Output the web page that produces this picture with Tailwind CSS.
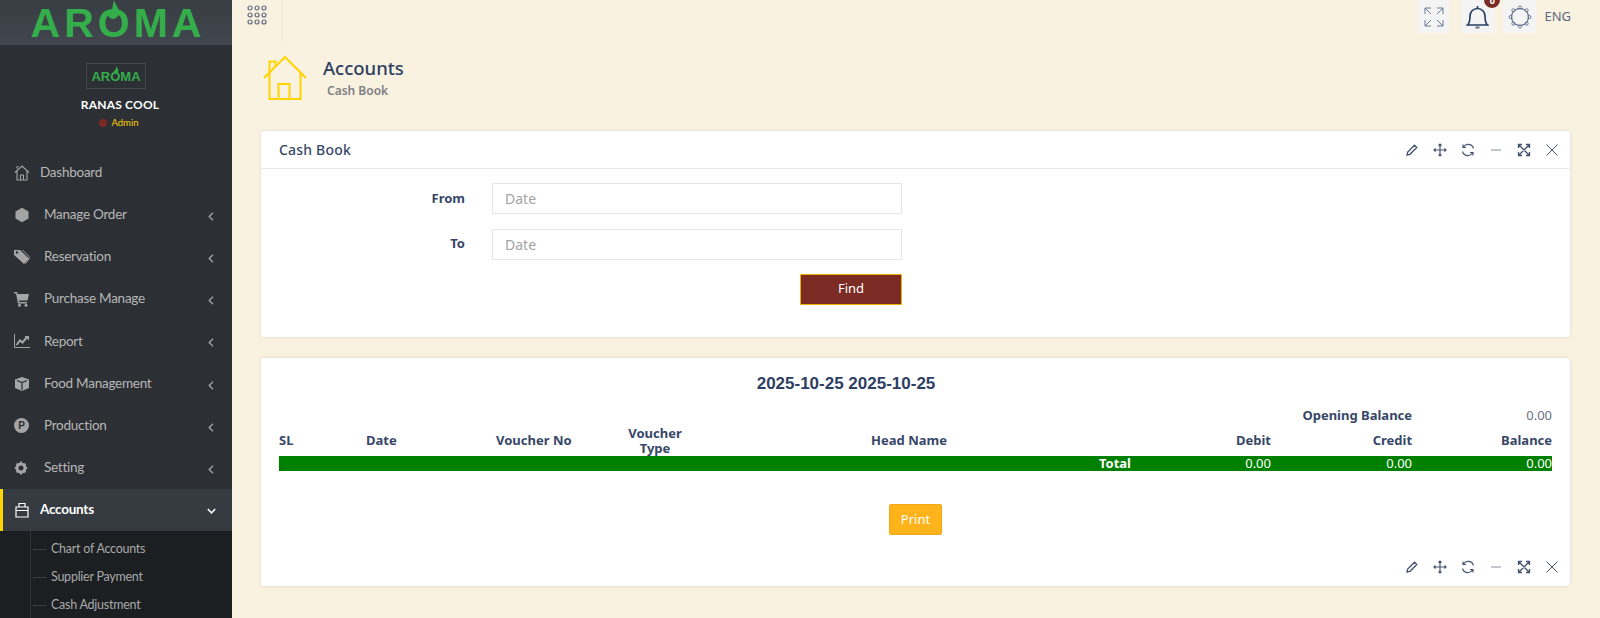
<!DOCTYPE html>
<html lang="en">
<head>
<meta charset="utf-8">
<title>Cash Book</title>
<script src="https://cdn.jsdelivr.net/npm/@tailwindcss/browser@4"></script>
</head>
<body class="m-0 h-[618px] w-[1600px] overflow-hidden bg-[#faf2e0] font-['Noto_Sans',sans-serif] text-[#374767]">
<div class="flex h-[618px] w-[1600px]">
  <aside class="flex h-[618px] w-[232px] shrink-0 flex-col overflow-hidden bg-[#2c2f34] font-['Lato',sans-serif]">
    <div class="relative flex h-[45px] shrink-0 items-center justify-center bg-gradient-to-b from-[#383d43] to-[#42474f] pl-[4px] font-['Liberation_Sans',sans-serif] text-[41px] font-bold leading-none tracking-[4px] text-[#34ae4b]">
      <span class="mt-[1px]">AROMA</span>
      <svg class="absolute left-[103px] top-0 h-[20px] w-[20px]" viewBox="0 0 20 20"><path d="M11 0c1 5 5 7 5 12 0 4-3 7-6 7s-6-3-6-7c2 1 4 0 5-3 1-3 1-6 2-9z" fill="#34ae4b"/></svg>
    </div>
    <div class="flex h-[106.500px] shrink-0 flex-col items-center">
      <div class="relative mt-[18px] flex h-[26px] w-[60px] items-center justify-center border border-[#44484e] bg-[#2c2f34] font-['Liberation_Sans',sans-serif] text-[13px] font-bold leading-none text-[#34ae4b]">AROMA
        <svg class="absolute left-[25px] top-[2px] h-[8px] w-[8px]" viewBox="0 0 20 20"><path d="M11 0c1 5 5 7 5 12 0 4-3 7-6 7s-6-3-6-7c2 1 4 0 5-3 1-3 1-6 2-9z" fill="#34ae4b"/></svg>
      </div>
      <div class="mt-[7px] pl-[8px] text-[12px] font-bold leading-[18px] tracking-[0.2px] text-white">RANAS COOL</div>
      <div class="mt-[1px] flex items-center gap-[4px] pl-[6px] text-[9.500px] leading-[16px] text-[#ffd400]"><span class="h-[8px] w-[8px] rounded-full bg-[#7b2b24]"></span>Admin</div>
    </div>
    <nav class="text-[13.500px] leading-none tracking-[-0.25px] text-[#b7b7b7]">
      <a class="flex h-[42.200px] items-center pl-[14px]">
        <svg class="h-[16px] w-[16px] shrink-0" viewBox="0 0 16 16" fill="none" stroke="#a5a5a5" stroke-width="1.100"><path d="M1 7.500 8 1l7 6.500M3 6v9h10V6M6.500 15v-5h3v5M3 3.500V1.800h1.500"/></svg>
        <span class="ml-[10px]">Dashboard</span>
      </a>
      <a class="flex h-[42.200px] items-center pl-[14px]">
        <svg class="h-[16px] w-[16px] shrink-0" viewBox="0 0 16 16"><path d="M8 .8 14.500 4.400v7.200L8 15.200 1.500 11.600V4.400z" fill="#a5a5a5"/></svg>
        <span class="ml-[14px] flex-1">Manage Order</span>
        <svg class="mr-[18px] mt-[3px] h-[9px] w-[6px]" viewBox="0 0 6 9" fill="none" stroke="#a5a5a5" stroke-width="1.300"><path d="M5 .8 1.200 4.500 5 8.200"/></svg>
      </a>
      <a class="flex h-[42.200px] items-center pl-[14px]">
        <svg class="h-[16px] w-[16px] shrink-0" viewBox="0 0 16 16"><path d="M0 1h6l9 8.500-5 5.500L0 6z" fill="#a5a5a5"/><path d="M8.500 1 16 8.500l-4.500 6" fill="none" stroke="#a5a5a5"/><circle cx="3" cy="3.500" r="1.200" fill="#2c2f34"/></svg>
        <span class="ml-[14px] flex-1">Reservation</span>
        <svg class="mr-[18px] mt-[3px] h-[9px] w-[6px]" viewBox="0 0 6 9" fill="none" stroke="#a5a5a5" stroke-width="1.300"><path d="M5 .8 1.200 4.500 5 8.200"/></svg>
      </a>
      <a class="flex h-[42.200px] items-center pl-[14px]">
        <svg class="h-[16px] w-[16px] shrink-0" viewBox="0 0 16 16"><path d="M0 1h3l.7 2H15l-1.500 6.500H5l.3 1.500H13v1.500H4L2 2.500H0z" fill="#a5a5a5"/><circle cx="5.500" cy="14.300" r="1.500" fill="#a5a5a5"/><circle cx="12" cy="14.300" r="1.500" fill="#a5a5a5"/></svg>
        <span class="ml-[14px] flex-1">Purchase Manage</span>
        <svg class="mr-[18px] mt-[3px] h-[9px] w-[6px]" viewBox="0 0 6 9" fill="none" stroke="#a5a5a5" stroke-width="1.300"><path d="M5 .8 1.200 4.500 5 8.200"/></svg>
      </a>
      <a class="flex h-[42.200px] items-center pl-[14px]">
        <svg class="h-[16px] w-[16px] shrink-0" viewBox="0 0 16 16" fill="none" stroke="#a5a5a5"><path d="M.5 1v13.500H16" stroke-width="1"/><path d="M2.500 12 6 7.500l2.500 2L13 4" stroke-width="2"/><path d="M10.500 3H15v4.500z" fill="#a5a5a5" stroke="none"/></svg>
        <span class="ml-[14px] flex-1">Report</span>
        <svg class="mr-[18px] mt-[3px] h-[9px] w-[6px]" viewBox="0 0 6 9" fill="none" stroke="#a5a5a5" stroke-width="1.300"><path d="M5 .8 1.200 4.500 5 8.200"/></svg>
      </a>
      <a class="flex h-[42.200px] items-center pl-[14px]">
        <svg class="h-[16px] w-[16px] shrink-0" viewBox="0 0 16 16"><path d="M8 1 15 3.500V12L8 15 1 12V3.500z" fill="#a5a5a5"/><path d="M3 4.500 8 6.500l5-2M8 6.500V14" fill="none" stroke="#2c2f34" stroke-width="1.200"/></svg>
        <span class="ml-[14px] flex-1">Food Management</span>
        <svg class="mr-[18px] mt-[3px] h-[9px] w-[6px]" viewBox="0 0 6 9" fill="none" stroke="#a5a5a5" stroke-width="1.300"><path d="M5 .8 1.200 4.500 5 8.200"/></svg>
      </a>
      <a class="flex h-[42.200px] items-center pl-[14px]">
        <span class="flex h-[15px] w-[15px] shrink-0 items-center justify-center rounded-full bg-[#a5a5a5] font-['Liberation_Sans',sans-serif] text-[10px] font-bold text-[#2c2f34]">P</span>
        <span class="ml-[15px] flex-1">Production</span>
        <svg class="mr-[18px] mt-[3px] h-[9px] w-[6px]" viewBox="0 0 6 9" fill="none" stroke="#a5a5a5" stroke-width="1.300"><path d="M5 .8 1.200 4.500 5 8.200"/></svg>
      </a>
      <a class="flex h-[42.200px] items-center pl-[14px]">
        <svg class="h-[16px] w-[16px] shrink-0" viewBox="0 0 16 16" fill="none"><circle cx="7" cy="8" r="4" stroke="#a5a5a5" stroke-width="3"/><path d="M7 1.500v2.500M7 12v2.500M.8 8h2.500M10.700 8h2.500M2.600 3.600l1.700 1.700M9.700 10.700l1.700 1.700M11.400 3.600 9.700 5.300M4.300 10.700l-1.700 1.700" stroke="#a5a5a5" stroke-width="2"/></svg>
        <span class="ml-[14px] flex-1">Setting</span>
        <svg class="mr-[18px] mt-[3px] h-[9px] w-[6px]" viewBox="0 0 6 9" fill="none" stroke="#a5a5a5" stroke-width="1.300"><path d="M5 .8 1.200 4.500 5 8.200"/></svg>
      </a>
      <a class="flex h-[42px] items-center border-l-[3px] border-[#ffd400] bg-[#363a41] pb-[1px] pl-[11px] font-bold text-white">
        <svg class="h-[16px] w-[16px] shrink-0" viewBox="0 0 16 16" fill="none" stroke="#fff" stroke-width="1.200"><path d="M2 5h12v10H2zM2 8.500h12M5 5V1.500h6V5"/></svg>
        <span class="ml-[10px] flex-1">Accounts</span>
        <svg class="mr-[16px] mt-[3px] h-[6px] w-[9px]" viewBox="0 0 9 6" fill="none" stroke="#fff" stroke-width="1.500"><path d="M.8 1 4.500 4.800 8.200 1"/></svg>
      </a>
    </nav>
    <ul class="relative flex-1 bg-[#1c1f22] pt-[4px] text-[12.500px] leading-[28px] tracking-[-0.25px] text-[#a8a8a8]">
      <span class="absolute bottom-0 left-[30px] top-0 w-[1px] bg-[#34373b]"></span>
      <li class="flex h-[28px] items-center pl-[33px]"><span class="mr-[5px] h-[1px] w-[13px] bg-[#3c3f43]"></span>Chart of Accounts</li>
      <li class="flex h-[28px] items-center pl-[33px]"><span class="mr-[5px] h-[1px] w-[13px] bg-[#3c3f43]"></span>Supplier Payment</li>
      <li class="flex h-[28px] items-center pl-[33px]"><span class="mr-[5px] h-[1px] w-[13px] bg-[#3c3f43]"></span>Cash Adjustment</li>
    </ul>
  </aside>

  <main class="min-w-0 flex-1">
    <header class="flex h-[45px] items-start">
      <div class="flex h-[45px] w-[51px] items-start border-r border-[#ece8dc] pl-[15px] pt-[5px]">
        <svg class="h-[20px] w-[20px]" viewBox="0 0 20 20" fill="none" stroke="#5f6b80" stroke-width="1.200"><circle cx="3" cy="3" r="2"/><circle cx="10" cy="3" r="2"/><circle cx="17" cy="3" r="2"/><circle cx="3" cy="10" r="2"/><circle cx="10" cy="10" r="2"/><circle cx="17" cy="10" r="2"/><circle cx="3" cy="17" r="2"/><circle cx="10" cy="17" r="2"/><circle cx="17" cy="17" r="2"/></svg>
      </div>
      <div class="ml-auto flex items-start pr-[29px]">
        <div class="flex h-[33px] w-[31px] items-center justify-center bg-[#f4f4f4]">
          <svg class="h-[20px] w-[20px]" viewBox="0 0 20 20" fill="none" stroke="#6c7a92" stroke-width="1"><path d="M1 7V1h6M1 1l6 6M13 1h6v6M19 1l-6 6M1 13v6h6M1 19l6-6M19 13v6h-6M19 19l-6-6"/></svg>
        </div>
        <div class="relative ml-[12px] flex h-[33px] w-[33px] items-center justify-center bg-[#f4f4f4]">
          <svg class="h-[27px] w-[23px]" viewBox="0 0 23 27" fill="none" stroke="#2b3f66" stroke-width="1.700"><path d="M1.500 22c2.500-2 2.500-5 2.500-9 0-4 3-7.500 7.500-7.500S19 9 19 13c0 4 0 7 2.500 9z"/><path d="M11.500 5.500V3"/><path d="M9.500 24.500h4" stroke-width="2" stroke="#6b7280"/></svg>
          <span class="absolute right-[-7px] top-[-9px] flex h-[18px] w-[18px] items-center justify-center rounded-full border border-white bg-[#7b2b24] text-[9px] font-bold leading-none text-white">0</span>
        </div>
        <div class="ml-[9px] flex h-[33px] w-[33px] items-center justify-center bg-[#f4f4f4]">
          <svg class="h-[24px] w-[24px]" viewBox="0 0 24 24" fill="none" stroke="#6c7a92" stroke-width="1"><circle cx="12" cy="12" r="8.500" stroke="#2b3f66"/><circle cx="12" cy="2.500" r="1.500"/><circle cx="12" cy="21.500" r="1.500"/><circle cx="2.500" cy="12" r="1.500"/><circle cx="21.500" cy="12" r="1.500"/><circle cx="5.300" cy="5.300" r="1.500"/><circle cx="18.700" cy="5.300" r="1.500"/><circle cx="5.300" cy="18.700" r="1.500"/><circle cx="18.700" cy="18.700" r="1.500"/></svg>
        </div>
        <span class="ml-[8px] mt-[8px] text-[13px] leading-[17px] text-[#5b6880]">ENG</span>
      </div>
    </header>

    <section class="flex h-[86px] items-start pl-[31px] pt-[11px]">
      <svg class="h-[44px] w-[44px] shrink-0" viewBox="0 0 44 44" fill="none" stroke="#ffd400" stroke-width="2"><path d="M1 22 22 1l21 21M6.500 17v26h31V17M15.500 43V28h11v15M6.500 17V5.500h6V11"/></svg>
      <div class="ml-[16px]">
        <h1 class="font-['Noto_Sans',sans-serif] text-[18.500px] font-medium leading-[24px] text-[#2d3e63]">Accounts</h1>
        <p class="ml-[4px] mt-[3px] text-[12px] font-semibold leading-[16px] text-[#7c7f86]">Cash Book</p>
      </div>
    </section>

    <div class="ml-[29px] mr-[30px] h-[206px] rounded-[2px] bg-white shadow-[0_0_3px_rgba(55,71,103,0.18)]">
      <div class="flex h-[38px] items-center border-b border-[#e8e9ef] pl-[18px] pr-[11px]">
        <h2 class="text-[14px] font-medium leading-none tracking-[0.2px] text-[#374767]">Cash Book</h2>
        <div class="ml-auto flex w-[154px] items-center justify-between">
          <svg class="h-[14px] w-[14px]" viewBox="0 0 14 14" fill="none" stroke="#46536e" stroke-width="1.300"><path d="M2 12l.7-3L9.500 2.200l2.300 2.300L5 11.300zM2 12l1-.2"/></svg>
          <svg class="h-[14px] w-[14px]" viewBox="0 0 14 14" fill="none" stroke="#46536e" stroke-width="1.200"><path d="M7 1v12M1 7h12M5.500 2.500 7 1l1.500 1.500M5.500 11.500 7 13l1.500-1.500M2.500 5.500 1 7l1.500 1.500M11.500 5.500 13 7l-1.500 1.500"/></svg>
          <svg class="h-[14px] w-[14px]" viewBox="0 0 14 14" fill="none" stroke="#46536e" stroke-width="1.200"><path d="M12.500 5.500A5.500 5.500 0 0 0 2.500 4M1.500 8.500A5.500 5.500 0 0 0 11.500 10M2 1.500V4.500h3M12 12.500V9.500H9"/></svg>
          <svg class="h-[14px] w-[14px]" viewBox="0 0 14 14" fill="none" stroke="#9aa2b1" stroke-width="1.200"><path d="M2 7h10"/></svg>
          <svg class="h-[14px] w-[14px]" viewBox="0 0 14 14" fill="none" stroke="#46536e" stroke-width="1.300"><path d="M2 2l10 10M12 2 2 12M1.500 5V1.500H5M9 1.500h3.500V5M1.500 9v3.500H5M9 12.500h3.500V9"/></svg>
          <svg class="h-[14px] w-[14px]" viewBox="0 0 14 14" fill="none" stroke="#46536e" stroke-width="1"><path d="M1.500 1.500l11 11M12.500 1.500l-11 11"/></svg>
        </div>
      </div>
      <form class="pt-[14px]">
        <div class="flex h-[31px] items-center">
          <label class="w-[204px] text-right text-[13px] font-bold leading-none text-[#374767]">From</label>
          <input class="ml-[27px] h-[31px] w-[410px] border border-[#e6e6e6] px-[12px] pb-[1px] text-[14px] placeholder:text-[#a3a3a3]" placeholder="Date">
        </div>
        <div class="mt-[15px] flex h-[31px] items-center">
          <label class="mb-[3px] w-[204px] text-right text-[13px] font-bold leading-none text-[#374767]">To</label>
          <input class="ml-[27px] h-[31px] w-[410px] border border-[#e6e6e6] px-[12px] pb-[1px] text-[14px] placeholder:text-[#a3a3a3]" placeholder="Date">
        </div>
        <div class="mt-[14px] flex w-[641px] justify-end">
          <button type="button" class="h-[31px] w-[102px] rounded-[1px] border border-[#f0b000] bg-[#7b2b24] pb-[2px] text-[13px] leading-none text-white">Find</button>
        </div>
      </form>
    </div>

    <div class="ml-[29px] mr-[30px] mt-[21px] h-[228px] rounded-[2px] bg-white px-[18px] shadow-[0_0_3px_rgba(55,71,103,0.18)]">
      <h3 class="pr-[139px] pt-[15px] text-center font-['Liberation_Sans',sans-serif] text-[17px] font-bold leading-[22px] text-[#2d3e63]">2025-10-25 2025-10-25</h3>
      <table class="mt-[10px] w-[1273px] table-fixed border-collapse text-[13px] leading-[15px]">
        <colgroup>
          <col class="w-[87px]"><col class="w-[130px]"><col class="w-[129px]"><col class="w-[60px]"><col class="w-[448px]"><col class="w-[138px]"><col class="w-[141px]"><col class="w-[140px]">
        </colgroup>
        <tbody>
          <tr class="h-[20px]">
            <th colspan="7" class="p-0 text-right font-bold">Opening Balance</th>
            <td class="p-0 text-right text-[#6b7280]">0.00</td>
          </tr>
          <tr class="h-[31px] align-middle">
            <th class="p-0 text-left font-bold">SL</th>
            <th class="p-0 text-left font-bold">Date</th>
            <th class="p-0 text-left font-bold">Voucher No</th>
            <th class="p-0 text-center font-bold">Voucher Type</th>
            <th class="p-0 text-center font-bold">Head Name</th>
            <th class="p-0 text-right font-bold">Debit</th>
            <th class="p-0 text-right font-bold">Credit</th>
            <th class="p-0 text-right font-bold">Balance</th>
          </tr>
          <tr class="h-[15px] bg-[#008000] text-white">
            <th colspan="5" class="p-0 pr-[2px] text-right font-bold">Total</th>
            <td class="p-0 text-right">0.00</td>
            <td class="p-0 text-right">0.00</td>
            <td class="p-0 text-right">0.00</td>
          </tr>
        </tbody>
      </table>
      <div class="mt-[33px] flex justify-center">
        <button type="button" class="h-[31px] w-[53px] rounded-[2px] border border-[#f0a818] bg-[#ffb31a] pb-[1px] text-[13px] leading-none text-white">Print</button>
      </div>
      <div class="mr-[-7px] mt-[25px] ml-auto flex w-[154px] items-center justify-between">
        <svg class="h-[14px] w-[14px]" viewBox="0 0 14 14" fill="none" stroke="#46536e" stroke-width="1.300"><path d="M2 12l.7-3L9.500 2.200l2.300 2.300L5 11.300zM2 12l1-.2"/></svg>
        <svg class="h-[14px] w-[14px]" viewBox="0 0 14 14" fill="none" stroke="#46536e" stroke-width="1.200"><path d="M7 1v12M1 7h12M5.500 2.500 7 1l1.500 1.500M5.500 11.500 7 13l1.500-1.500M2.500 5.500 1 7l1.500 1.500M11.500 5.500 13 7l-1.500 1.500"/></svg>
        <svg class="h-[14px] w-[14px]" viewBox="0 0 14 14" fill="none" stroke="#46536e" stroke-width="1.200"><path d="M12.500 5.500A5.500 5.500 0 0 0 2.500 4M1.500 8.500A5.500 5.500 0 0 0 11.500 10M2 1.500V4.500h3M12 12.500V9.500H9"/></svg>
        <svg class="h-[14px] w-[14px]" viewBox="0 0 14 14" fill="none" stroke="#9aa2b1" stroke-width="1.200"><path d="M2 7h10"/></svg>
        <svg class="h-[14px] w-[14px]" viewBox="0 0 14 14" fill="none" stroke="#46536e" stroke-width="1.300"><path d="M2 2l10 10M12 2 2 12M1.500 5V1.500H5M9 1.500h3.500V5M1.500 9v3.500H5M9 12.500h3.500V9"/></svg>
        <svg class="h-[14px] w-[14px]" viewBox="0 0 14 14" fill="none" stroke="#46536e" stroke-width="1"><path d="M1.500 1.500l11 11M12.500 1.500l-11 11"/></svg>
      </div>
    </div>
  </main>
</div>
</body>
</html>
